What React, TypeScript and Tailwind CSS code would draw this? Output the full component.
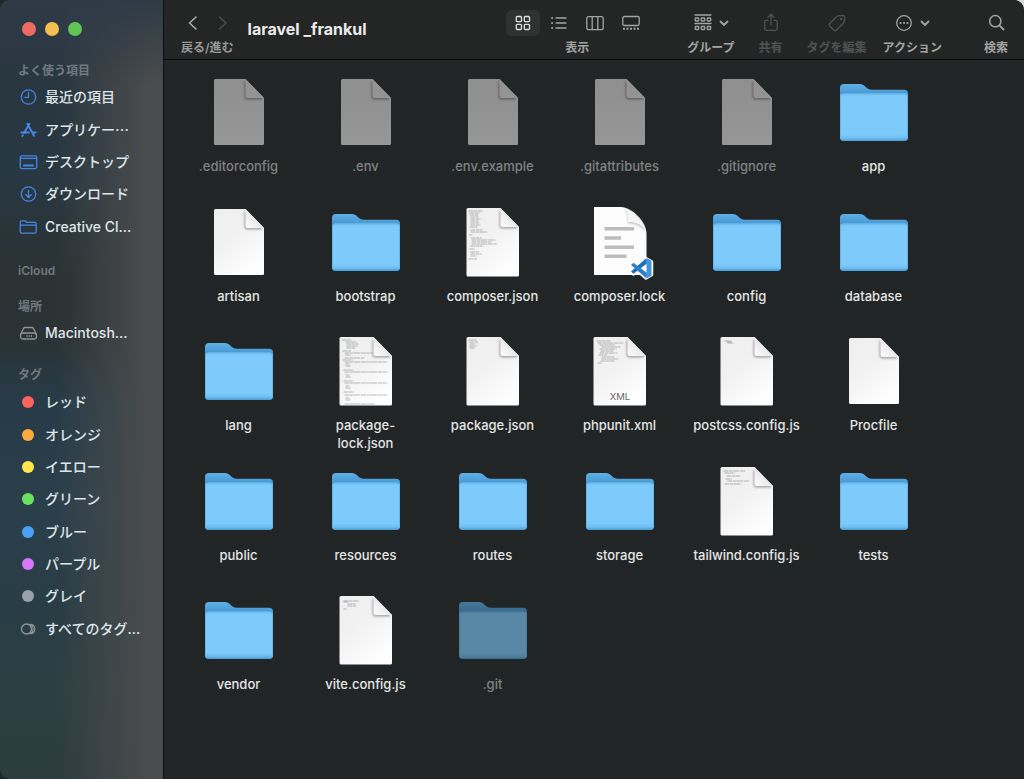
import { ReactNode } from "react";

type Kind = "folder" | "file" | "vscode" | "xml";
type Entry = { name: string; kind: Kind; hidden?: boolean; code?: string };

const entries: Entry[] = [
  { name: ".editorconfig", kind: "file", hidden: true },
  { name: ".env", kind: "file", hidden: true },
  { name: ".env.example", kind: "file", hidden: true },
  { name: ".gitattributes", kind: "file", hidden: true },
  { name: ".gitignore", kind: "file", hidden: true },
  { name: "app", kind: "folder" },
  { name: "artisan", kind: "file" },
  { name: "bootstrap", kind: "folder" },
  { name: "composer.json", kind: "file", code: "composer" },
  { name: "composer.lock", kind: "vscode" },
  { name: "config", kind: "folder" },
  { name: "database", kind: "folder" },
  { name: "lang", kind: "folder" },
  { name: "package-lock.json", kind: "file", code: "lock" },
  { name: "package.json", kind: "file", code: "package" },
  { name: "phpunit.xml", kind: "xml", code: "xml" },
  { name: "postcss.config.js", kind: "file", code: "postcss" },
  { name: "Procfile", kind: "file" },
  { name: "public", kind: "folder" },
  { name: "resources", kind: "folder" },
  { name: "routes", kind: "folder" },
  { name: "storage", kind: "folder" },
  { name: "tailwind.config.js", kind: "file", code: "tailwind" },
  { name: "tests", kind: "folder" },
  { name: "vendor", kind: "folder" },
  { name: "vite.config.js", kind: "file", code: "vite" },
  { name: ".git", kind: "folder", hidden: true },
];

// Each row of a preview: [x, y, width]
const previews: Record<string, number[][]> = {
  composer: [
    [2, 2, 14], [3, 4, 10], [3, 6, 9], [4, 8, 8], [4, 10, 10], [4, 12, 8], [4, 14, 9], [4, 16, 10], [3, 18, 8],
    [4, 21, 12], [4, 23, 17], [3, 26, 3], [4, 29, 11], [5, 31, 24], [5, 33, 20], [5, 35, 26], [4, 37, 12],
    [3, 40, 5], [4, 43, 9], [4, 45, 11], [4, 47, 6], [2, 50, 9],
  ],
  lock: [
    [2, 2, 10], [6, 4, 11], [7, 6, 12], [7, 8, 11], [7, 10, 9], [3, 13, 9], [5, 15, 43], [6, 17, 5], [5, 20, 20],
    [3, 22, 10], [5, 24, 43], [6, 26, 4], [6, 28, 5], [4, 32, 10], [5, 34, 43], [6, 37, 4], [6, 39, 5], [4, 43, 10],
    [5, 45, 43], [6, 48, 4], [6, 50, 5], [4, 54, 10], [5, 57, 43], [6, 60, 4], [6, 62, 5], [5, 66, 30],
  ],
  package: [[2, 2, 8], [3, 4, 9], [3, 6, 6], [3, 8, 7], [3, 10, 5]],
  xml: [
    [3, 3, 14], [4, 5, 26], [6, 7, 15], [8, 9, 19], [6, 11, 17], [7, 13, 13], [6, 15, 18], [5, 17, 9], [8, 19, 13],
    [8, 21, 17], [7, 23, 14], [4, 25, 4],
  ],
  postcss: [[4, 3, 7], [6, 4, 5], [7, 5, 6]],
  tailwind: [[3, 3, 22], [4, 5, 10], [6, 8, 14], [5, 11, 6], [7, 13, 22], [4, 16, 17]],
  vite: [[4, 4, 15], [4, 5, 5], [8, 7, 8], [8, 9, 9], [4, 12, 3]],
};

function Defs() {
  return (
    <svg className="absolute size-0" aria-hidden="true">
      <defs>
        <linearGradient id="paper" x1="0" y1="0" x2="0.6" y2="1">
          <stop offset="0" stopColor="#eeeeee" />
          <stop offset="0.5" stopColor="#f2f2f2" />
          <stop offset="1" stopColor="#fefefe" />
        </linearGradient>
        <linearGradient id="paperDim" x1="0" y1="0" x2="0" y2="1">
          <stop offset="0" stopColor="#8f8f8f" />
          <stop offset="1" stopColor="#969696" />
        </linearGradient>
        <linearGradient id="fold" x1="0" y1="1" x2="1" y2="0">
          <stop offset="0" stopColor="#ffffff" />
          <stop offset="0.5" stopColor="#e8e8e8" />
        </linearGradient>
        <linearGradient id="folderBack" x1="0" y1="0" x2="0" y2="1">
          <stop offset="0" stopColor="#5fb0e6" />
          <stop offset="0.2" stopColor="#4494d0" />
        </linearGradient>
        <linearGradient id="folderFront" x1="0" y1="0" x2="0" y2="1">
          <stop offset="0" stopColor="#74c3f6" />
          <stop offset="0.08" stopColor="#7ecbfb" />
          <stop offset="0.86" stopColor="#7ecbfb" />
          <stop offset="0.94" stopColor="#6cbdf2" />
          <stop offset="1" stopColor="#4a9ad3" />
        </linearGradient>
        <filter id="soft" x="-30%" y="-30%" width="160%" height="160%">
          <feGaussianBlur stdDeviation="1.1" />
        </filter>
      </defs>
    </svg>
  );
}

function FolderIcon({ dim }: { dim?: boolean }) {
  return (
    <svg viewBox="0 0 70 68" className={dim ? "h-[68px] w-[70px] opacity-60" : "h-[68px] w-[70px]"} aria-hidden="true">
      <path
        d="M1 9Q1 5 5 5H20.500C23.500 5 24.500 6 26.500 7.800C28.500 9.700 30 10.800 33 10.800H65Q69 10.800 69 14.500V58Q69 62 65 62H5Q1 62 1 58Z"
        fill="url(#folderBack)"
      />
      <path d="M1 17.500Q1 14.500 4.500 14.500H65.500Q69 14.500 69 17.500V58Q69 62 65 62H5Q1 62 1 58Z" fill="url(#folderFront)" />
      <path d="M1.500 58V18Q1.500 15 4.500 15H65.500Q68.500 15 68.500 18V58" fill="none" stroke="#66b6eb" strokeWidth="1" />
    </svg>
  );
}

function FileIcon({ code, dim, label }: { code?: string; dim?: boolean; label?: string }) {
  const large = Boolean(label || code);
  const left = large ? 8.5 : 10;
  const edge = large ? 61 : 60;
  const top = large ? -1 : 0;
  const bottom = large ? 67.5 : 66;
  const cut = edge - 18.5;
  return (
    <svg viewBox="0 0 70 68" className="h-[68px] w-[70px] overflow-visible" aria-hidden="true">
      <path
        d={`M${left + 1.5} ${top}H${cut}L${edge} ${top + 19}V${bottom - 1.5}Q${edge} ${bottom} ${edge - 1.5} ${bottom}H${left + 1.5}Q${left} ${bottom} ${left} ${bottom - 1.5}V${top + 1.5}Q${left} ${top} ${left + 1.5} ${top}Z`}
        fill={dim ? "url(#paperDim)" : "url(#paper)"}
      />
      {code &&
        previews[code].map(([x, y, w], i) => (
          <path key={i} d={`M${left + x} ${y}h${w}`} stroke="#444" strokeOpacity="0.45" strokeWidth="0.8" strokeDasharray="5 0.500 3 0.400 7 0.700" />
        ))}
      <path
        d={`M${cut - 1} ${top + 2}V${top + 17}Q${cut - 1} ${top + 20.5} ${cut + 2} ${top + 20.5}H${edge - 2}V${top + 18}Z`}
        fill={dim ? "#555" : "#8f8f8f"}
        opacity="0.8"
        filter="url(#soft)"
      />
      <path d={`M${cut} ${top}V${top + 16.5}Q${cut} ${top + 19} ${cut + 2.5} ${top + 19}H${edge}Z`} fill={dim ? "#939393" : "url(#fold)"} />
      {label && (
        <text x="35" y="62" textAnchor="middle" fontSize="9.500" fill="#666" className="font-['Inter']">
          {label}
        </text>
      )}
    </svg>
  );
}

function VsCodeFileIcon() {
  return (
    <svg viewBox="0 0 70 68" className="h-[68px] w-[70px] overflow-visible" aria-hidden="true">
      <path d="M9 -2H36C46 -2 61.500 12 61.500 25V66H9Z" fill="#fcfcfc" />
      <path d="M40 0C43 3 43 9 43 14C50 14 57 17 60 22C59 13 50 2 40 0Z" fill="#888" opacity="0.6" filter="url(#soft)" />
      <path d="M38 -1.800C43 1 43 8 42.500 13C49 13 57 15 61 22C58 11 48 1 38 -1.800Z" fill="#f4f4f4" />
      <path d="M19.500 19.700H49M19.500 29H36M19.500 38.200H49M19.500 47.200H41.500" stroke="#bcbcbc" strokeWidth="3.600" />
      <path
        d="M61 49L67 52.500V66L61 69.500L53 62.500L48.500 65.500L45.500 63.500L49.500 59.300L45.500 55L48.500 53L53 56Z"
        fill="#fff"
        stroke="#fff"
        strokeWidth="2.500"
        strokeLinejoin="round"
      />
      <path d="M61.500 49L46 62.500L48.500 64.800L62 54.500Z" fill="#1f6fb5" />
      <path d="M61.500 69.500L46 56L48.500 53.700L62 64Z" fill="#2b80c8" />
      <path d="M61.500 49L66.500 51.800V66.700L61.500 69.500Z" fill="#3f98dc" />
    </svg>
  );
}

function EntryIcon({ entry }: { entry: Entry }) {
  if (entry.kind === "folder") return <FolderIcon dim={entry.hidden} />;
  if (entry.kind === "vscode") return <VsCodeFileIcon />;
  return <FileIcon code={entry.code} dim={entry.hidden} label={entry.kind === "xml" ? "XML" : undefined} />;
}

function Glyph({ children, className }: { children: ReactNode; className: string }) {
  return (
    <svg
      viewBox="0 0 20 20"
      className={className}
      fill="none"
      stroke="currentColor"
      strokeWidth="1.300"
      strokeLinecap="round"
      strokeLinejoin="round"
      aria-hidden="true"
    >
      {children}
    </svg>
  );
}

const side = "size-5 shrink-0 text-[#4585e6]";

const favorites = [
  {
    label: "最近の項目",
    icon: (
      <Glyph className={side}>
        <circle cx="10.500" cy="10" r="7.200" />
        <path d="M10.500 5.500V10.300H6.800" />
      </Glyph>
    ),
  },
  {
    label: "アプリケー",
    cut: true,
    icon: (
      <Glyph className={side}>
        <path d="M11.500 3.800L6 13M9.300 3.800L16 15.800M3.300 12.500H11M14.500 12.500H17.700M4.400 16L4.900 15.200" strokeWidth="1.900" />
      </Glyph>
    ),
  },
  {
    label: "デスクトップ",
    icon: (
      <Glyph className={side}>
        <rect x="2.300" y="3.800" width="16.400" height="12.800" rx="1.500" />
        <path d="M2.500 6.300H18.500" />
        <path d="M6 13.500H15" strokeWidth="2" />
      </Glyph>
    ),
  },
  {
    label: "ダウンロード",
    icon: (
      <Glyph className={side}>
        <circle cx="10.500" cy="10" r="7.200" />
        <path d="M10.500 6.300V13.300M7.800 10.800L10.500 13.500L13.200 10.800" />
      </Glyph>
    ),
  },
  {
    label: "Creative Cl...",
    icon: (
      <Glyph className={side}>
        <path d="M2.300 14.800V5.200Q2.300 3.800 3.700 3.800H7L8.800 5.300H16.800Q18.200 5.300 18.200 6.700V14.800Q18.200 16.200 16.800 16.200H3.700Q2.300 16.200 2.300 14.800ZM2.500 8.200H18" />
      </Glyph>
    ),
  },
];

const tags = [
  { label: "レッド", dot: "bg-[#fc645d]" },
  { label: "オレンジ", dot: "bg-[#fbaa3f]" },
  { label: "イエロー", dot: "bg-[#fde74c]" },
  { label: "グリーン", dot: "bg-[#6be160]" },
  { label: "ブルー", dot: "bg-[#4ba0fb]" },
  { label: "パープル", dot: "bg-[#d877fb]" },
  { label: "グレイ", dot: "bg-[#98a0a9]" },
];

function SideLink({ icon, children }: { icon: ReactNode; children: ReactNode }) {
  return (
    <li className="flex">
      <a href="#" className="flex flex-1 items-center gap-[7px] whitespace-nowrap text-sm font-medium text-[#dfe6e9]">
        {icon}
        <span>{children}</span>
      </a>
    </li>
  );
}

function SideHeading({ children }: { children: ReactNode }) {
  return <h2 className="pl-[18px] text-xs leading-4 font-semibold text-[#6f7a80]">{children}</h2>;
}

function Sidebar() {
  return (
    <aside className="w-[164px] shrink-0 border-r border-[#0d0f10] bg-[linear-gradient(to_bottom,#2e3a46_0%,transparent_11%),linear-gradient(to_right,transparent_35%,#4b4c4d_92%),linear-gradient(to_bottom,#2b3946_0%,#28363f_12%,#283843_22%,#2a3233_35%,#2a3235_43%,#273c48_52%,#2b3f4b_65%,#293d46_78%,#2d3f43_88%,#2c3c3f_100%)]">
      <div className="flex gap-[9px] pt-[22px] pl-[22px]">
        <button aria-label="閉じる" className="size-[14px] rounded-full bg-[#ed6b60]" />
        <button aria-label="しまう" className="size-[14px] rounded-full bg-[#f5bf4f]" />
        <button aria-label="拡大" className="size-[14px] rounded-full bg-[#61c454]" />
      </div>
      <nav className="pt-[27px]">
        <SideHeading>よく使う項目</SideHeading>
        <ul className="mt-[2px] grid min-h-[162px] grid-rows-5 pl-[18px]">
          {favorites.map((f) => (
            <SideLink key={f.label} icon={f.icon}>
              {f.label}
              {f.cut && <span className="font-['Noto_Sans_CJK_JP']">…</span>}
            </SideLink>
          ))}
        </ul>
        <div className="pt-5">
          <SideHeading>iCloud</SideHeading>
        </div>
        <div className="pt-5">
          <SideHeading>場所</SideHeading>
        </div>
        <ul className="mt-[2px] grid min-h-8 pl-[18px]">
          <SideLink
            icon={
              <Glyph className="size-5 shrink-0 text-[#8e9496]">
                <path d="M2.800 11L5.500 5.500Q6 4.500 7.100 4.500H13.900Q15 4.500 15.500 5.500L18.200 11" />
                <rect x="2.500" y="10" width="16" height="6" rx="2.500" />
                <path d="M8.500 13H15" strokeWidth="1.800" strokeDasharray="1 1.200" strokeLinecap="butt" />
              </Glyph>
            }
          >
            Macintosh...
          </SideLink>
        </ul>
        <div className="pt-[18px]">
          <SideHeading>タグ</SideHeading>
        </div>
        <ul className="mt-[3px] grid min-h-[259px] grid-rows-8 pl-[18px]">
          {tags.map((t) => (
            <SideLink
              key={t.label}
              icon={
                <span className="flex size-5 items-center justify-center">
                  <span className={`size-3 rounded-full ${t.dot}`} />
                </span>
              }
            >
              {t.label}
            </SideLink>
          ))}
          <SideLink
            icon={
              <Glyph className="size-5 shrink-0 text-[#8e989d]">
                <circle cx="8.500" cy="10" r="5" />
                <path d="M11.500 5.200A5 5 0 0 1 11.500 14.800M13.500 5.300A5 5 0 0 1 13.500 14.700" strokeWidth="1.100" />
              </Glyph>
            }
          >
            すべてのタグ...
          </SideLink>
        </ul>
      </nav>
    </aside>
  );
}

function Chevron() {
  return (
    <svg viewBox="0 0 10 10" className="size-[10px]" fill="none" stroke="currentColor" strokeWidth="1.800" strokeLinecap="round" strokeLinejoin="round" aria-hidden="true">
      <path d="M1.500 3.500L5 7L8.500 3.500" />
    </svg>
  );
}

function Tool({ label, dim, children }: { label: string; dim?: boolean; children: ReactNode }) {
  return (
    <button className={dim ? "flex flex-col items-center text-[#515353]" : "flex flex-col items-center text-[#a3a4a4]"}>
      <span className="flex h-[26px] items-center gap-[6px]">{children}</span>
      <span className="mt-1 text-xs leading-4 font-semibold whitespace-nowrap">{label}</span>
    </button>
  );
}

const view = "flex h-[26px] w-[34px] items-center justify-center rounded-md";

function Toolbar() {
  return (
    <header className="flex items-start border-b border-[#0c0d0e] bg-[#242625] pt-[10px] pr-4 pb-[3px] pl-[17px]">
      <div className="flex flex-col items-center text-[#989999]">
        <div className="flex h-[26px] items-center gap-[10px]">
          <button aria-label="戻る">
            <Glyph className="size-5 text-[#b0b1b1]">
              <path d="M14 4L7.500 10L14 16" strokeWidth="1.500" />
            </Glyph>
          </button>
          <button aria-label="進む">
            <Glyph className="size-5 text-[#4c4e4e]">
              <path d="M7.500 4L14 10L7.500 16" strokeWidth="1.500" />
            </Glyph>
          </button>
        </div>
        <span className="mt-1 text-xs leading-4 font-semibold whitespace-nowrap">戻る/進む</span>
      </div>
      <h1 className="mt-[7px] ml-[14px] text-base leading-6 font-bold whitespace-nowrap text-[#ececec]">laravel _frankul</h1>
      <div className="ml-auto flex flex-col items-center text-[#a3a4a4]">
        <div className="flex items-center gap-[2px]">
          <button aria-label="アイコン" className={`${view} bg-[#303232] text-[#e0e0e0]`}>
            <Glyph className="size-5">
              <rect x="3.300" y="3.500" width="5.200" height="5.200" rx="1" />
              <rect x="11.300" y="3.500" width="5.200" height="5.200" rx="1" />
              <rect x="3.300" y="11.300" width="5.200" height="5.200" rx="1" />
              <rect x="11.300" y="11.300" width="5.200" height="5.200" rx="1" />
            </Glyph>
          </button>
          <button aria-label="リスト" className={view}>
            <Glyph className="size-5">
              <path d="M7 5H17M7 10H17M7 15H17" />
              <path d="M3 5H3.200M3 10H3.200M3 15H3.200" strokeWidth="1.800" />
            </Glyph>
          </button>
          <button aria-label="カラム" className={view}>
            <Glyph className="size-5">
              <rect x="1.800" y="3.700" width="16.400" height="13" rx="1.800" />
              <path d="M7.200 4V16.500M12.800 4V16.500" />
            </Glyph>
          </button>
          <button aria-label="ギャラリー" className={view}>
            <Glyph className="size-5">
              <rect x="1.800" y="3.500" width="16.400" height="9" rx="1.500" />
              <path d="M2 15.800H18" strokeWidth="2" strokeDasharray="2 1.500" strokeLinecap="butt" />
            </Glyph>
          </button>
        </div>
        <span className="mt-1 text-xs leading-4 font-semibold">表示</span>
      </div>
      <div className="ml-[39px] flex">
        <Tool label="グループ">
          <Glyph className="size-5">
            <path d="M2 2H18M2 10.500H18" />
            <rect x="2.200" y="5" width="3.500" height="3" rx="0.700" />
            <rect x="8.200" y="5" width="3.500" height="3" rx="0.700" />
            <rect x="14.200" y="5" width="3.500" height="3" rx="0.700" />
            <rect x="2.200" y="13.500" width="3.500" height="3" rx="0.700" />
            <rect x="8.200" y="13.500" width="3.500" height="3" rx="0.700" />
            <rect x="14.200" y="13.500" width="3.500" height="3" rx="0.700" />
          </Glyph>
          <Chevron />
        </Tool>
      </div>
      <div className="ml-6 flex gap-6">
        <Tool label="共有" dim>
          <Glyph className="size-5">
            <path d="M7 7.300H5.300Q3.800 7.300 3.800 8.800V15.800Q3.800 17.300 5.300 17.300H14.700Q16.200 17.300 16.200 15.800V8.800Q16.200 7.300 14.700 7.300H13M10 12V1.500M7 4.300L10 1.300L13 4.300" />
          </Glyph>
        </Tool>
        <Tool label="タグを編集" dim>
          <Glyph className="size-5">
            <path d="M2.500 10.800L9.500 3.800Q10.500 2.800 12 2.600L15.800 2.400Q17.600 2.400 17.600 4.200L17.400 8Q17.200 9.300 16.300 10.300L9.300 17.300Q8.200 18.200 7.100 17.200L2.500 12.700Q1.700 11.700 2.500 10.800Z" />
            <circle cx="14" cy="6" r="0.600" fill="currentColor" />
          </Glyph>
        </Tool>
      </div>
      <div className="ml-4 flex gap-[42px]">
        <Tool label="アクション">
          <Glyph className="size-5">
            <circle cx="10" cy="10" r="7.300" />
            <path d="M6.500 10H6.600M10 10H10.100M13.400 10H13.500" strokeWidth="2" />
          </Glyph>
          <Chevron />
        </Tool>
        <Tool label="検索">
          <Glyph className="size-5">
            <circle cx="9.300" cy="8.200" r="5.600" strokeWidth="1.500" />
            <path d="M13.400 12.300L17.500 16.500" strokeWidth="1.800" />
          </Glyph>
        </Tool>
      </div>
    </header>
  );
}

export default function App() {
  return (
    <div lang="ja" className="min-h-screen bg-[linear-gradient(to_right,#20262a_50%,#d8d8d8_50%)] font-['Inter','Noto_Sans_CJK_JP',sans-serif]">
      <Defs />
      <div className="flex min-h-screen overflow-hidden rounded-t-[10px] rounded-bl-[10px] bg-[#222526]">
        <Sidebar />
        <div className="flex min-w-0 flex-1 flex-col">
          <Toolbar />
          <main className="flex-1 bg-[#222526] pt-[19px] pl-[11px]">
            <ul className="grid min-h-[648px] auto-rows-[minmax(129px,auto)] grid-cols-[repeat(auto-fill,127px)]">
              {entries.map((e) => (
                <li key={e.name} className="flex flex-col items-center">
                  <EntryIcon entry={e} />
                  <span
                    className={
                      e.hidden
                        ? "mt-[10px] max-w-[112px] text-center text-[13px] leading-[18px] font-medium text-[#808282]"
                        : "mt-[10px] max-w-[112px] text-center text-[13px] leading-[18px] font-medium text-[#e4e5e5]"
                    }
                  >
                    {e.name}
                  </span>
                </li>
              ))}
            </ul>
          </main>
        </div>
      </div>
    </div>
  );
}
